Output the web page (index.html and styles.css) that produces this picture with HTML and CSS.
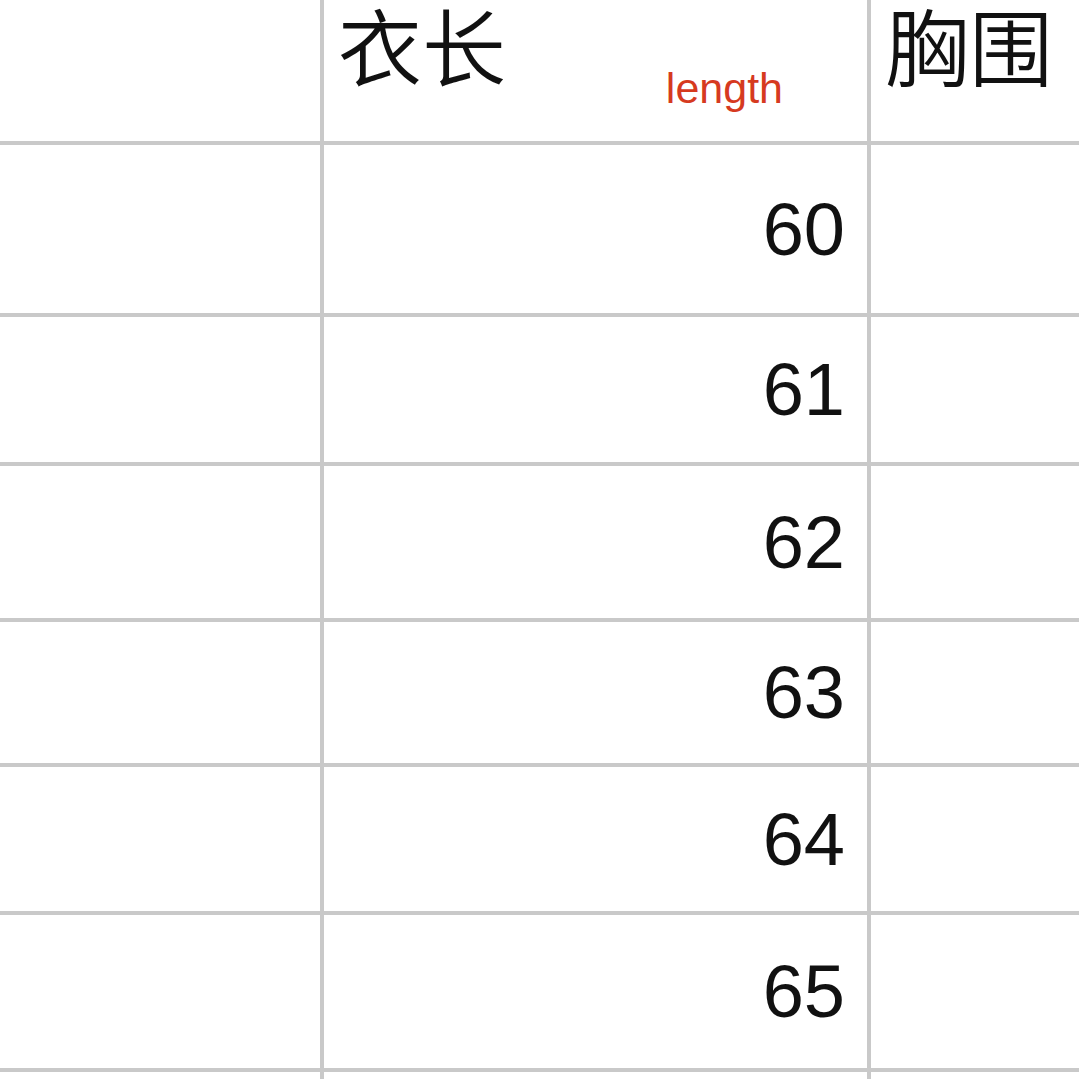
FILE: index.html
```html
<!DOCTYPE html>
<html lang="zh">
<head>
<meta charset="utf-8">
<title>尺码表</title>
<link rel="stylesheet" href="styles.css">
</head>
<body>
<div class="sheet">
  <div class="cell"></div>
  <div class="cell head"><span class="cn">衣长</span><span class="note">length</span></div>
  <div class="cell head"><span class="cn">胸围</span></div>

  <div class="cell"></div>
  <div class="cell num">60</div>
  <div class="cell"></div>

  <div class="cell"></div>
  <div class="cell num">61</div>
  <div class="cell"></div>

  <div class="cell"></div>
  <div class="cell num">62</div>
  <div class="cell"></div>

  <div class="cell"></div>
  <div class="cell num">63</div>
  <div class="cell"></div>

  <div class="cell"></div>
  <div class="cell num">64</div>
  <div class="cell"></div>

  <div class="cell"></div>
  <div class="cell num">65</div>
  <div class="cell"></div>

  <div class="cell"></div>
  <div class="cell"></div>
  <div class="cell"></div>
</div>
</body>
</html>
```
FILE: styles.css
```css
html, body {
  margin: 0;
  padding: 0;
  background: #ffffff;
  overflow: hidden;
}

body {
  width: 1079px;
  height: 1079px;
}

.sheet {
  display: grid;
  grid-template-columns: 320px 543px 1fr;
  grid-template-rows: 141px 168px 145px 152px 141px 144px 153px 60px;
  gap: 4px;
  background: #c9c9c9;
  width: 1079px;
}

.cell {
  background: #ffffff;
  position: relative;
}

.head {
  padding-left: 14px;
  padding-top: 2px;
}

.cn {
  display: block;
  font-family: "Noto Sans CJK SC", "Noto Sans", sans-serif;
  font-weight: 350;
  font-size: 84px;
  line-height: 84px;
  color: #111111;
}

.note {
  position: absolute;
  top: 67px;
  right: 84px;
  font-family: "Liberation Sans", Arial, sans-serif;
  font-size: 43px;
  line-height: 43px;
  color: #d63a1f;
}

.num {
  display: flex;
  align-items: center;
  justify-content: flex-end;
  padding-right: 22px;
  font-family: "Liberation Sans", Arial, sans-serif;
  font-size: 74px;
  color: #111111;
}
```
